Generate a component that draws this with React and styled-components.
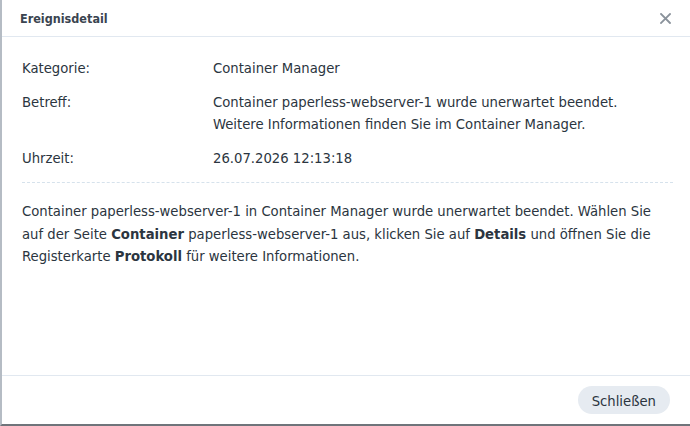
import styled, { createGlobalStyle } from "styled-components"

const Global = createGlobalStyle`
    html, body {
        margin: 0;
        padding: 0;
        background: #ffffff;
    }
    body {
        font-family: "DejaVu Sans Condensed", "DejaVu Sans", sans-serif;
    }
`;

const Dialog = styled.div`
    width: 690px;
    height: 426px;
    box-sizing: border-box;
    display: flex;
    flex-direction: column;
    background: #ffffff;
    border-left: 2px solid #b5bcc4;
    border-bottom: 2px solid #6f747a;
    color: #2b3540;
`;

const Header = styled.header`
    height: 36px;
    flex-shrink: 0;
    display: flex;
    align-items: center;
    justify-content: space-between;
    padding: 0 18px 0 18px;
    border-bottom: 1px solid #e1e8f0;

    h1 {
        margin: 0;
        font-size: 12.5px;
        font-weight: 700;
        color: #3a4450;
    }
`;

const Close = styled.button`
    border: none;
    background: none;
    padding: 0;
    width: 14px;
    height: 14px;
    display: flex;
    align-items: center;
    justify-content: center;
    cursor: pointer;

    svg {
        display: block;
    }
`;

const Body = styled.div`
    flex: 1;
    padding: 20px 17px 0 20px;
    font-size: 14.7px;
    line-height: 22px;
`;

const Fields = styled.div`
    display: grid;
    grid-template-columns: 191px 1fr;
    row-gap: 12px;
    padding-bottom: 13px;
    border-bottom: 1px dashed #d6e2ec;
`;

const Label = styled.div`
    color: #2b3540;
`;

const Value = styled.div`
    color: #2b3540;
`;

const Description = styled.p`
    margin: 17px 0 0 0;
    line-height: 22.5px;
    white-space: nowrap;

    b {
        font-weight: 700;
    }
`;

const Footer = styled.footer`
    height: 48px;
    flex-shrink: 0;
    display: flex;
    align-items: center;
    justify-content: flex-end;
    padding: 0 20px;
    border-top: 1px solid #e1e8f0;
`;

const Button = styled.button`
    height: 28px;
    padding: 0 14px;
    border: none;
    border-radius: 14px;
    background: #e6ebf1;
    color: #2b3540;
    font-family: inherit;
    font-size: 14.7px;
    cursor: pointer;
`;

export default function App() {
    return (
        <>
            <Global />
            <Dialog>
                <Header>
                    <h1>Ereignisdetail</h1>
                    <Close aria-label="Schließen">
                        <svg width="11" height="11" viewBox="0 0 11 11">
                            <path d="M1 1 L10 10 M10 1 L1 10" stroke="#8a929b" strokeWidth="1.8" strokeLinecap="square" />
                        </svg>
                    </Close>
                </Header>
                <Body>
                    <Fields>
                        <Label>Kategorie:</Label>
                        <Value>Container Manager</Value>
                        <Label>Betreff:</Label>
                        <Value>
                            Container paperless-webserver-1 wurde unerwartet beendet.<br />
                            Weitere Informationen finden Sie im Container Manager.
                        </Value>
                        <Label>Uhrzeit:</Label>
                        <Value>26.07.2026 12:13:18</Value>
                    </Fields>
                    <Description>
                        Container paperless-webserver-1 in Container Manager wurde unerwartet beendet. Wählen Sie<br />
                        auf der Seite <b>Container</b> paperless-webserver-1 aus, klicken Sie auf <b>Details</b> und öffnen Sie die<br />
                        Registerkarte <b>Protokoll</b> für weitere Informationen.
                    </Description>
                </Body>
                <Footer>
                    <Button>Schließen</Button>
                </Footer>
            </Dialog>
        </>
    )
}
